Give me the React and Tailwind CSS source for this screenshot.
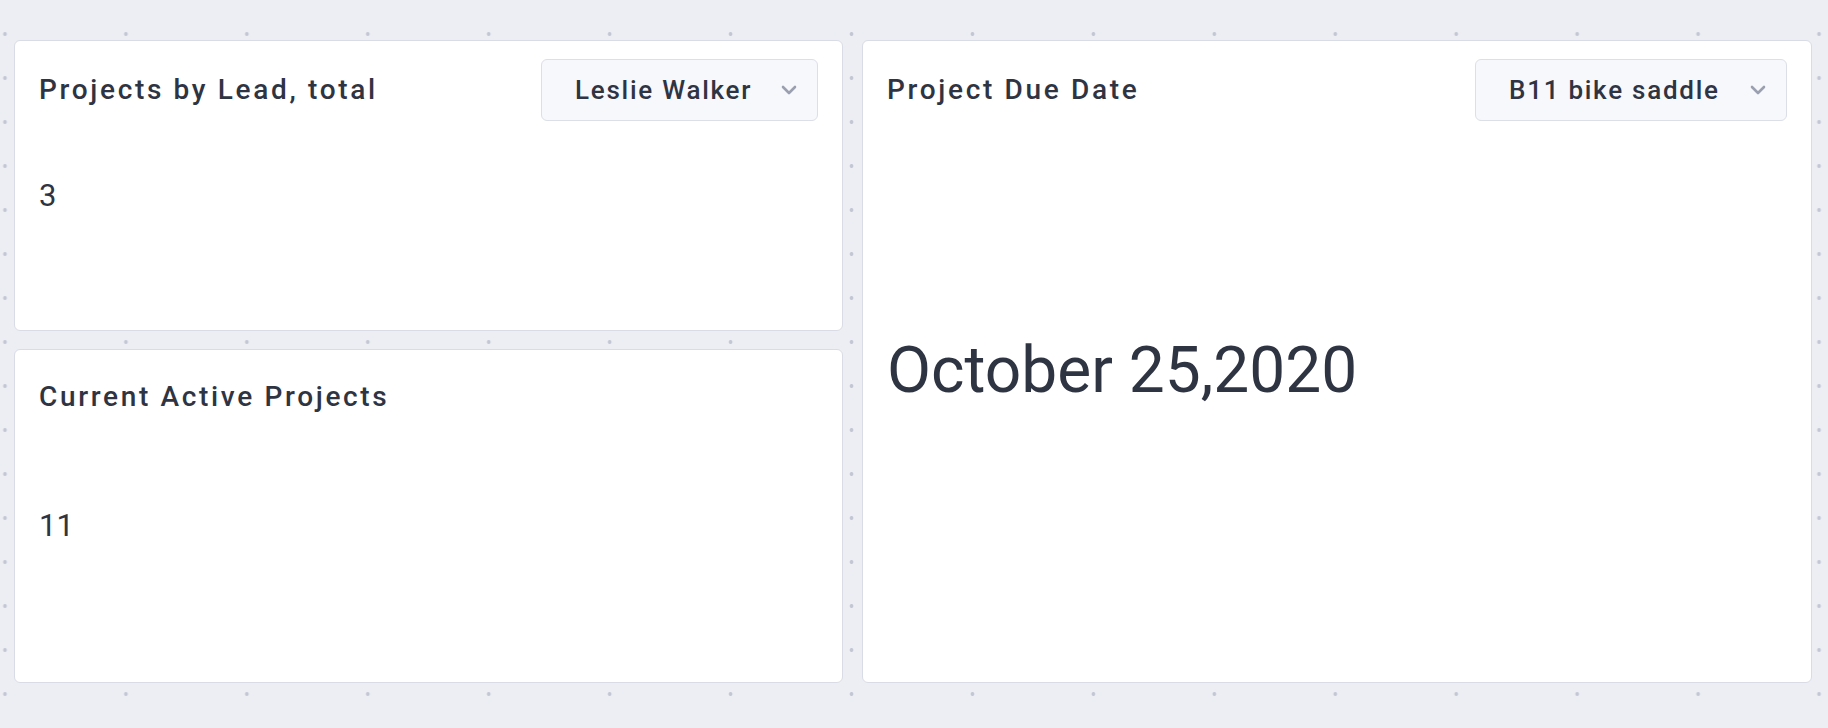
import React from "react";

const ChevronDown = () => (
  <svg width="16" height="10" viewBox="0 0 16 10" fill="none" className="shrink-0">
    <path d="M2 2l6 6 6-6" stroke="#9ba0b1" strokeWidth="2.6" strokeLinecap="round" strokeLinejoin="round" />
  </svg>
);

function Picker({ label, width }) {
  return (
    <div
      className={`flex h-[62px] ${width} items-center justify-between rounded-md border border-[#dcdfe8] bg-[#f7f8fc] pl-[33px] pr-[20px]`}
    >
      <span className="text-[26px] leading-none font-medium tracking-[0.067em] text-[#2f3443]">{label}</span>
      <ChevronDown />
    </div>
  );
}

function Card({ className = "", children }) {
  return (
    <div className={`rounded-md border border-[#d9dce5] bg-white ${className}`}>{children}</div>
  );
}

export default function App() {
  return (
    <div className="h-[728px] w-[1828px] bg-[#edeef3] bg-[radial-gradient(circle,#c3c7d4_1.6px,transparent_2.2px)] bg-[length:120.95px_44px] bg-[position:-55.5px_12px] pl-[14px] pr-[16px] pt-[40px] font-[family-name:Roboto,sans-serif] text-[#2f3443]">
      <div className="grid grid-cols-[829px_950px] grid-rows-[291px_334px] gap-x-[19px] gap-y-[18px]">
        <Card className="flex flex-col">
          <div className="flex items-center justify-between pl-[24px] pr-[24px] pt-[18px]">
            <h2 className="text-[28px] leading-none font-medium tracking-[0.095em]">Projects by Lead, total</h2>
            <Picker label="Leslie Walker" width="w-[277px]" />
          </div>
          <div className="mt-[59px] pl-[24px] text-[31px] leading-none">3</div>
        </Card>

        <Card className="row-span-2 flex flex-col">
          <div className="flex items-center justify-between pl-[24px] pr-[24px] pt-[18px]">
            <h2 className="text-[28px] leading-none font-medium tracking-[0.095em]">Project Due Date</h2>
            <Picker label="B11 bike saddle" width="w-[312px]" />
          </div>
          <div className="mt-[218px] pl-[24px] text-[64px] leading-none">October 25,2020</div>
        </Card>

        <Card className="flex flex-col">
          <h2 className="pl-[24px] pt-[33px] text-[28px] leading-none font-medium tracking-[0.095em]">
            Current Active Projects
          </h2>
          <div className="mt-[99px] pl-[24px] text-[31px] leading-none">11</div>
        </Card>
      </div>
    </div>
  );
}
